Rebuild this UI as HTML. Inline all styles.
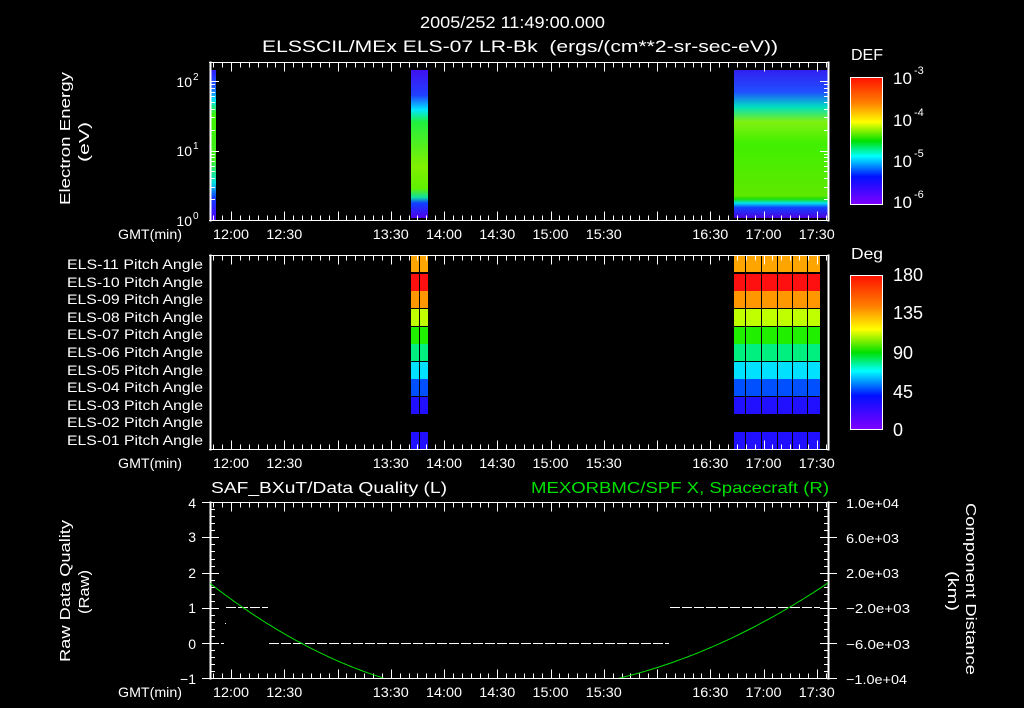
<!DOCTYPE html>
<html><head><meta charset="utf-8"><style>
html,body{margin:0;padding:0;background:#000;width:1024px;height:708px;overflow:hidden}
svg text{font-family:"Liberation Sans","DejaVu Sans",sans-serif;fill:#fff}
</style></head><body>
<svg id="s" width="1024" height="708" viewBox="0 0 1024 708" xmlns="http://www.w3.org/2000/svg">
<defs>
<linearGradient id="cb" x1="0" y1="0" x2="0" y2="1">
<stop offset="0" stop-color="#ff1000"/><stop offset="0.2" stop-color="#ff8000"/><stop offset="0.35" stop-color="#ffff00"/><stop offset="0.5" stop-color="#00e000"/><stop offset="0.62" stop-color="#00ffff"/><stop offset="0.78" stop-color="#0010ff"/><stop offset="1" stop-color="#8000ff"/>
</linearGradient>
<linearGradient id="b1" x1="0" y1="0" x2="0" y2="1">
<stop offset="0" stop-color="#3020ff"/><stop offset="0.12" stop-color="#2060ff"/><stop offset="0.2" stop-color="#00e0ff"/><stop offset="0.3" stop-color="#40f000"/><stop offset="0.6" stop-color="#40f020"/><stop offset="0.75" stop-color="#00e0e0"/><stop offset="0.85" stop-color="#1040ff"/><stop offset="1" stop-color="#5000ff"/>
</linearGradient>
<linearGradient id="b2" x1="0" y1="0" x2="0" y2="1">
<stop offset="0" stop-color="#4010f0"/><stop offset="0.17" stop-color="#2040ff"/><stop offset="0.27" stop-color="#00e8ff"/><stop offset="0.35" stop-color="#20f040"/><stop offset="0.65" stop-color="#80f000"/><stop offset="0.8" stop-color="#60f000"/><stop offset="0.86" stop-color="#10e0a0"/><stop offset="0.9" stop-color="#1040ff"/><stop offset="1" stop-color="#5000f0"/>
</linearGradient>
<linearGradient id="b3" x1="0" y1="0" x2="0" y2="1">
<stop offset="0" stop-color="#3020f0"/><stop offset="0.15" stop-color="#2050ff"/><stop offset="0.25" stop-color="#00e0c0"/><stop offset="0.35" stop-color="#80f010"/><stop offset="0.5" stop-color="#40f000"/><stop offset="0.85" stop-color="#60e800"/><stop offset="0.87" stop-color="#20e000"/><stop offset="0.9" stop-color="#00e0f0"/><stop offset="0.93" stop-color="#1040ff"/><stop offset="1" stop-color="#5000e0"/>
</linearGradient>
<clipPath id="c3"><rect x="210" y="502" width="619" height="176"/></clipPath>
</defs>
<text x="420" y="28" font-size="17" textLength="185" lengthAdjust="spacingAndGlyphs">2005/252 11:49:00.000</text>
<text x="262" y="52" font-size="17" textLength="516" lengthAdjust="spacingAndGlyphs" xml:space="preserve">ELSSCIL/MEx ELS-07 LR-Bk  (ergs/(cm**2-sr-sec-eV))</text>

<rect x="211" y="70" width="5" height="150" fill="url(#b1)"/>
<rect x="411" y="70" width="17" height="148" fill="url(#b2)"/>
<rect x="734" y="70" width="94" height="148" fill="url(#b3)"/>

<g id="pitch"></g>
<g id="ax" stroke="#fff" fill="none" stroke-width="1"></g>

<text transform="translate(70,205) rotate(-90)" font-size="15" textLength="133" lengthAdjust="spacingAndGlyphs">Electron Energy</text>
<text transform="translate(89,162) rotate(-90)" font-size="15" textLength="40" lengthAdjust="spacingAndGlyphs">(eV)</text>
<text transform="translate(70,662) rotate(-90)" font-size="15" textLength="142" lengthAdjust="spacingAndGlyphs">Raw Data Quality</text>
<text transform="translate(89,614) rotate(-90)" font-size="15" textLength="44" lengthAdjust="spacingAndGlyphs">(Raw)</text>
<text transform="translate(966,503) rotate(90)" font-size="15" textLength="172" lengthAdjust="spacingAndGlyphs">Component Distance</text>
<text transform="translate(948,571) rotate(90)" font-size="15" textLength="40" lengthAdjust="spacingAndGlyphs">(km)</text>

<text x="192" y="87" font-size="14" text-anchor="end">10</text><text x="193" y="80" font-size="10">2</text>
<text x="192" y="156" font-size="14" text-anchor="end">10</text><text x="193" y="149" font-size="10">1</text>
<text x="192" y="226" font-size="14" text-anchor="end">10</text><text x="193" y="219" font-size="10">0</text>

<rect x="850.5" y="77.5" width="32" height="127" fill="url(#cb)" stroke="#fff"/>
<text x="851" y="60" font-size="16" textLength="32" lengthAdjust="spacingAndGlyphs">DEF</text>
<g font-size="17"><text x="893" y="84">10</text><text x="914" y="74" font-size="11">-3</text>
<text x="893" y="126">10</text><text x="914" y="116" font-size="11">-4</text>
<text x="893" y="167">10</text><text x="914" y="157" font-size="11">-5</text>
<text x="893" y="208">10</text><text x="914" y="198" font-size="11">-6</text></g>
<rect x="850.5" y="275.5" width="32" height="154" fill="url(#cb)" stroke="#fff"/>
<text x="851" y="259" font-size="16" textLength="32" lengthAdjust="spacingAndGlyphs">Deg</text>
<g font-size="18"><text x="893" y="281">180</text><text x="893" y="319">135</text><text x="893" y="359">90</text><text x="893" y="398">45</text><text x="893" y="436">0</text></g>

<text x="211" y="493" font-size="16" textLength="236" lengthAdjust="spacingAndGlyphs">SAF_BXuT/Data Quality (L)</text>
<text x="531" y="493" font-size="16" textLength="298" lengthAdjust="spacingAndGlyphs" style="fill:#00e000">MEXORBMC/SPF X, Spacecraft (R)</text>
<g font-size="14" text-anchor="end"><text x="196" y="508">4</text><text x="196" y="542">3</text><text x="196" y="578">2</text><text x="196" y="613">1</text><text x="196" y="649">0</text><text x="196" y="684">−1</text></g>
<g font-size="13"><text x="846" y="508" textLength="53" lengthAdjust="spacingAndGlyphs">1.0e+04</text><text x="846" y="543" textLength="53" lengthAdjust="spacingAndGlyphs">6.0e+03</text><text x="846" y="578" textLength="53" lengthAdjust="spacingAndGlyphs">2.0e+03</text><text x="846" y="613" textLength="64" lengthAdjust="spacingAndGlyphs">−2.0e+03</text><text x="846" y="649" textLength="64" lengthAdjust="spacingAndGlyphs">−6.0e+03</text><text x="846" y="684" textLength="61" lengthAdjust="spacingAndGlyphs">−1.0e+04</text></g>
<g stroke="#fff" stroke-dasharray="10,2" stroke-width="1">
<line x1="226" y1="607.5" x2="268" y2="607.5"/>
<line x1="670" y1="607.5" x2="820" y2="607.5"/>
<line x1="269" y1="643.5" x2="669" y2="643.5"/>
</g>
<rect x="221" y="643" width="3" height="1" fill="#fff"/><rect x="225" y="623" width="1" height="1" fill="#fff"/>
<polyline id="gc" clip-path="url(#c3)" fill="none" stroke="#00e000" stroke-width="1"/>
<g id="lab" font-size="14"></g>
</svg>
<script>
var ns="http://www.w3.org/2000/svg",ax=document.getElementById('ax');
function L(x1,y1,x2,y2){var e=document.createElementNS(ns,'line');e.setAttribute('x1',x1);e.setAttribute('y1',y1);e.setAttribute('x2',x2);e.setAttribute('y2',y2);ax.appendChild(e);}
function R(x,y,w,h,c,p){var e=document.createElementNS(ns,'rect');e.setAttribute('x',x);e.setAttribute('y',y);e.setAttribute('width',w);e.setAttribute('height',h);e.setAttribute('fill',c);(p||ax).appendChild(e);}
function T(x,y,s,a,tl){var e=document.createElementNS(ns,'text');e.setAttribute('x',x);e.setAttribute('y',y);if(a)e.setAttribute('text-anchor',a);if(tl){e.setAttribute('textLength',tl);e.setAttribute('lengthAdjust','spacingAndGlyphs');}e.textContent=s;document.getElementById('lab').appendChild(e);}
function X(t){return 231+(t-720)*1.775;}
var panels=[[62,220],[255,449],[502,678]];
var lbl=["12:00","12:30",null,"13:30","14:00","14:30","15:00","15:30",null,"16:30","17:00","17:30"];
var ly=[239,468,697];
panels.forEach(function(p,i){
 var t=p[0]+.5,b=p[1]+.5;
 R(210,p[0],1,p[1]-p[0]+1,'#fff');R(828,p[0],1,p[1]-p[0]+1,'#fff');
 L(209,t,829,t);L(209,b,829,b);
 for(var m=710;m<=1055;m+=5){var x=Math.round(X(m))+.5;if(x<211||x>828)continue;var big=(m%30==0);
  L(x,t,x,t+(big?9:5));L(x,b,x,b-(big?9:5));}
 for(var k=0;k<12;k++){if(lbl[k])T(X(720+30*k)-18,ly[i],lbl[k],null,36);}
 T(118,ly[i],"GMT(min)",null,64);
});
for(var d=0;d<3;d++)for(var n=1;n<10;n++){var v=d+Math.log10(n);if(v>2.2)break;var y=Math.round(220-v*69.5)+.5;if(y<62)break;var w=n==1?9:5;L(210,y,210+w,y);L(829,y,829-w,y);}
for(var v=-1;v<=4.01;v+=0.2){var y=Math.round(643-v*35.2)+.5;var big=Math.abs(v-Math.round(v))<.01;L(210,y,210+(big?9:5),y);L(829,y,829-(big?9:5),y);if(big){L(202,y,210,y);L(829,y,837,y);}}
for(var i=0;i<=30;i++){var y=Math.round(77+127*i/30)+.5;L(882,y,882-(i%10==0?0:4),y);}
for(var i=1;i<20;i++){var y=Math.round(275+154*i/20)+.5;L(882,y,878,y);}
var pg=document.getElementById('pitch');
var cols=["#ffa500","#ff1010","#ff9800","#c0ff00","#20f000","#00f080","#00e0ff","#0050ff","#2010ff",null,"#2010ff"];
var xs=[[411,419],[420,428],[734,745],[746,761],[762,777],[778,792],[793,807],[808,820]];
for(var r=0;r<11;r++){if(!cols[r])continue;var y0=Math.round(255+r*17.64)+1,h=Math.round(17.64)-1;
 if(r==0){y0=256;h=16;}if(r==10){h=449-y0;}
 xs.forEach(function(c){R(c[0],y0,c[1]-c[0],h,cols[r],pg);});}
var rl=["ELS-11","ELS-10","ELS-09","ELS-08","ELS-07","ELS-06","ELS-05","ELS-04","ELS-03","ELS-02","ELS-01"];
for(var r=0;r<11;r++)T(67,Math.round(269+r*17.6),rl[r]+" Pitch Angle",null,136);
var pts=[];for(var x=210;x<=829;x+=3){var d=x-502,h;if(d<0)h=0.00133*d*d-18.8;else h=0.001029*d*d-14.3;pts.push(x+","+(678-h).toFixed(1));}
document.getElementById('gc').setAttribute('points',pts.join(' '));
</script>
</body></html>
